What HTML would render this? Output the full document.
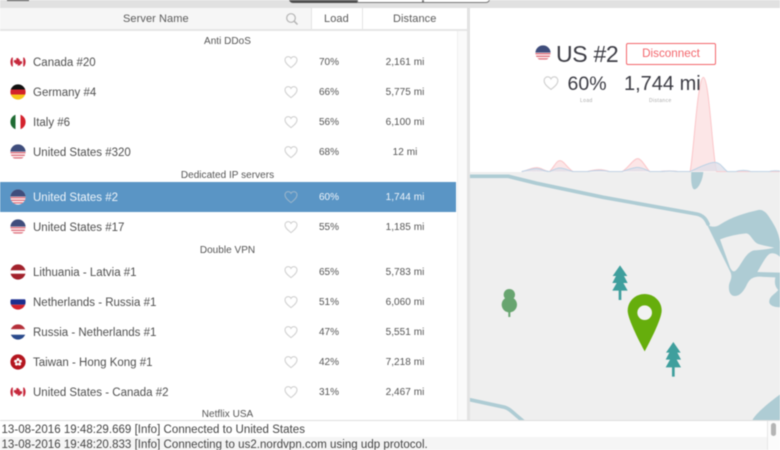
<!DOCTYPE html>
<html>
<head>
<meta charset="utf-8">
<style>
html,body{margin:0;padding:0;background:#fff}
body{width:780px;height:450px;position:relative;overflow:hidden;font-family:"Liberation Sans",sans-serif;color:#4a4a4a}
#w{position:absolute;left:0;top:0;width:780px;height:450px;overflow:hidden;filter:blur(.4px)}
.a{position:absolute}
.t{position:absolute;white-space:nowrap;font-size:11px;line-height:14px;letter-spacing:.08px}
.sec{position:absolute;left:-1px;width:457px;text-align:center;font-size:10px;line-height:12px;letter-spacing:.03px;color:#555}
.r{position:absolute;left:0;width:456px;height:30px}
.r .n{position:absolute;left:33px;top:8.500px;font-size:11.500px;line-height:14px;white-space:nowrap;color:#4f4f4f}
.r .l{position:absolute;left:319px;top:10px;font-size:10px;line-height:12px;color:#555}
.r .d{position:absolute;left:359px;width:92px;text-align:center;top:10px;font-size:10px;line-height:12px;letter-spacing:.05px;color:#555}
.r svg.f{position:absolute;left:10px;top:7px;width:16px;height:16px}
.r svg.h{position:absolute;left:284px;top:8px;width:14px;height:14px}
.s{background:#5a95c5}
.s .n,.s .l,.s .d{color:#eef4fa}
</style>
</head>
<body>
<div id="w">
<svg width="0" height="0" style="position:absolute">
<defs>
<clipPath id="c"><circle cx="8" cy="8" r="7.600"/></clipPath>
<symbol id="us" viewBox="0 0 16 16"><g clip-path="url(#c)"><rect width="16" height="16" fill="#fff"/><rect y="8" width="16" height="1.400" fill="#e0737f"/><rect y="10.600" width="16" height="1.400" fill="#e0737f"/><rect y="13.200" width="16" height="1.400" fill="#e0737f"/><rect width="16" height="7.600" fill="#3f4d7c"/></g></symbol>
<symbol id="ca" viewBox="0 0 16 16"><g clip-path="url(#c)"><rect width="16" height="16" fill="#fff"/><rect y="3.500" x="0" width="2.800" height="9" fill="#c6283c"/><rect y="3.500" x="13.200" width="2.800" height="9" fill="#c6283c"/><path d="M8 3.800l1 1.700.9-.4-.3 2.300 1.300-.7.3.8 1.100-.2-.4 1.400.5.4-2.300 1.700.2.800-2-.3V12h-.6v-1.900l-2 .3.2-.8L3.600 8l.5-.4-.4-1.400 1.100.2.3-.8 1.300.7-.3-2.300.9.4z" fill="#c6283c"/></g></symbol>
<symbol id="de" viewBox="0 0 16 16"><g clip-path="url(#c)"><rect width="16" height="5.500" fill="#111"/><rect y="5.500" width="16" height="5" fill="#d3222b"/><rect y="10.500" width="16" height="5.500" fill="#f5c61a"/></g></symbol>
<symbol id="it" viewBox="0 0 16 16"><g clip-path="url(#c)"><rect width="5.500" height="16" fill="#1f6b33"/><rect x="5.500" width="5" height="16" fill="#fff"/><rect x="10.500" width="5.500" height="16" fill="#d4232d"/></g></symbol>
<symbol id="lv" viewBox="0 0 16 16"><g clip-path="url(#c)"><rect width="16" height="16" fill="#a2222c"/><rect y="6.300" width="16" height="3.400" fill="#fff"/></g></symbol>
<symbol id="ru" viewBox="0 0 16 16"><g clip-path="url(#c)"><rect width="16" height="5.300" fill="#fff"/><rect y="5.300" width="16" height="5.400" fill="#1c2f8f"/><rect y="10.700" width="16" height="5.300" fill="#d4232d"/></g></symbol>
<symbol id="nl" viewBox="0 0 16 16"><g clip-path="url(#c)"><rect width="16" height="5.300" fill="#b5303a"/><rect y="5.300" width="16" height="5.400" fill="#fff"/><rect y="10.700" width="16" height="5.300" fill="#2a4a8c"/></g></symbol>
<symbol id="hk" viewBox="0 0 16 16"><g clip-path="url(#c)"><rect width="16" height="16" fill="#b4161f"/><circle cx="8" cy="5.500" r="1.500" fill="#fff"/><circle cx="10.400" cy="7.300" r="1.500" fill="#fff"/><circle cx="9.500" cy="10.100" r="1.500" fill="#fff"/><circle cx="6.500" cy="10.100" r="1.500" fill="#fff"/><circle cx="5.600" cy="7.300" r="1.500" fill="#fff"/></g></symbol>
<symbol id="hr" viewBox="0 0 14 14"><path d="M7 12.600C4.600 10.700 1 8.200 1 4.900 1 2.900 2.500 1.600 4.100 1.600 5.300 1.600 6.400 2.300 7 3.400 7.600 2.300 8.700 1.600 9.900 1.600 11.500 1.600 13 2.900 13 4.900 13 8.200 9.400 10.700 7 12.600z" fill="none" stroke="#cfcfcf" stroke-width="1"/></symbol>
</defs>
</svg>

<!-- top bar -->
<div class="a" style="left:0;top:0;width:780px;height:8px;background:#e1e1e1"></div>
<div class="a" style="left:7px;top:-1px;width:22px;height:2px;background:#444"></div>
<div class="a" style="left:289px;top:-4px;width:68px;height:7px;background:#505050;border-radius:0 0 0 4px"></div>
<div class="a" style="left:357px;top:-4px;width:66px;height:7px;background:#fff;border:1px solid #777;box-sizing:border-box"></div>
<div class="a" style="left:423px;top:-4px;width:67px;height:7px;background:#fff;border:1px solid #777;box-sizing:border-box;border-radius:0 0 4px 0"></div>

<!-- header -->
<div class="a" style="left:0;top:8px;width:311px;height:21px;background:#f6f6f6"></div>
<div class="a" style="left:311px;top:8px;width:52px;height:21px;background:#fff;border-left:1px solid #e4e4e4;box-sizing:border-box"></div>
<div class="a" style="left:362px;top:8px;width:106px;height:21px;background:#fff;border-left:1px solid #e4e4e4;box-sizing:border-box"></div>
<div class="a" style="left:0;top:29px;width:468px;height:2px;background:#e6e6e6"></div>
<div class="t" style="left:123px;top:12px;color:#5a5a5a">Server Name</div>
<div class="t" style="left:324px;top:12px;color:#5a5a5a">Load</div>
<div class="t" style="left:393px;top:12px;color:#5a5a5a">Distance</div>
<svg class="a" style="left:285px;top:12px" width="14" height="14" viewBox="0 0 14 14"><circle cx="6" cy="6" r="4.300" fill="none" stroke="#b5b5b5" stroke-width="1.200"/><path d="M9.200 9.200l3.300 3.300" stroke="#b5b5b5" stroke-width="1.500"/></svg>

<!-- list scrollbar & divider -->
<div class="a" style="left:457px;top:31px;width:10px;height:390px;background:#fafafa;border-left:1px solid #f0f0f0;box-sizing:border-box"></div>
<div class="a" style="left:467px;top:8px;width:3px;height:413px;background:#e3e3e3"></div>

<!-- rows -->
<div class="sec" style="top:36px">Anti DDoS</div>
<div class="r" style="top:47px"><svg class="f"><use href="#ca"/></svg><div class="n">Canada #20</div><svg class="h"><use href="#hr"/></svg><div class="l">70%</div><div class="d">2,161 mi</div></div>
<div class="r" style="top:77px"><svg class="f"><use href="#de"/></svg><div class="n">Germany #4</div><svg class="h"><use href="#hr"/></svg><div class="l">66%</div><div class="d">5,775 mi</div></div>
<div class="r" style="top:107px"><svg class="f"><use href="#it"/></svg><div class="n">Italy #6</div><svg class="h"><use href="#hr"/></svg><div class="l">56%</div><div class="d">6,100 mi</div></div>
<div class="r" style="top:137px"><svg class="f"><use href="#us"/></svg><div class="n">United States #320</div><svg class="h"><use href="#hr"/></svg><div class="l">68%</div><div class="d">12 mi</div></div>
<div class="sec" style="top:170px">Dedicated IP servers</div>
<div class="r s" style="top:182px"><svg class="f"><use href="#us"/></svg><div class="n">United States #2</div><svg class="h" style="opacity:.55"><use href="#hr"/></svg><div class="l">60%</div><div class="d">1,744 mi</div></div>
<div class="r" style="top:212px"><svg class="f"><use href="#us"/></svg><div class="n">United States #17</div><svg class="h"><use href="#hr"/></svg><div class="l">55%</div><div class="d">1,185 mi</div></div>
<div class="sec" style="top:245px">Double VPN</div>
<div class="r" style="top:257px"><svg class="f"><use href="#lv"/></svg><div class="n">Lithuania - Latvia #1</div><svg class="h"><use href="#hr"/></svg><div class="l">65%</div><div class="d">5,783 mi</div></div>
<div class="r" style="top:287px"><svg class="f"><use href="#ru"/></svg><div class="n">Netherlands - Russia #1</div><svg class="h"><use href="#hr"/></svg><div class="l">51%</div><div class="d">6,060 mi</div></div>
<div class="r" style="top:317px"><svg class="f"><use href="#nl"/></svg><div class="n">Russia - Netherlands #1</div><svg class="h"><use href="#hr"/></svg><div class="l">47%</div><div class="d">5,551 mi</div></div>
<div class="r" style="top:347px"><svg class="f"><use href="#hk"/></svg><div class="n">Taiwan - Hong Kong #1</div><svg class="h"><use href="#hr"/></svg><div class="l">42%</div><div class="d">7,218 mi</div></div>
<div class="r" style="top:377px"><svg class="f"><use href="#ca"/></svg><div class="n">United States - Canada #2</div><svg class="h"><use href="#hr"/></svg><div class="l">31%</div><div class="d">2,467 mi</div></div>
<div class="sec" style="top:409px">Netflix USA</div>

<!-- map -->
<div class="a" style="left:470px;top:172px;width:310px;height:249px;background:#efefef"></div>
<svg class="a" style="left:470px;top:170px" width="310" height="251" viewBox="0 0 930 753">
 <g fill="none" stroke="#aeccd4" stroke-linejoin="round" stroke-linecap="round">
  <path d="M-5 19H115L200 40 400 82 680 132C700 136 708 148 714 162" stroke-width="11"/>
  <path d="M-5 688L105 712C118 716 125 725 165 758" stroke-width="11"/>
 </g>
 <path fill="#aeccd4" d="M664 6H700C698 30 685 58 673 58 665 58 662 30 664 6z"/>
 <path fill="#aeccd4" d="M708 158C716 172 735 173 748 165 785 140 830 128 865 120 880 118 890 128 900 145 915 168 925 185 930 215L935 240V412C910 412 895 405 898 392 900 378 915 372 925 360 915 350 913 338 916 322L870 320C845 320 838 330 830 345 822 362 810 378 795 378 780 378 775 362 777 345 779 333 788 325 782 308z"/>
 <path fill="#efefef" d="M750 208C775 198 805 192 828 190 842 190 848 215 865 222 885 228 900 230 913 233 895 238 870 240 852 241 825 248 815 285 797 302 790 307 785 302 780 292z"/>
 <path fill="#efefef" d="M862 306C872 290 885 262 898 252 910 246 925 252 936 268V308z"/>
 <path fill="#aeccd4" d="M845 756C850 735 900 695 935 670V756z"/>
 <!-- trees -->
 <g fill="#3f9f9d">
  <path d="M450 286L472 318H462L473 339H460L473 362H454V390H446V362H427L440 339H427L438 318H428z"/>
  <path d="M610 516L632 548H622L633 569H620L633 592H614V620H606V592H587L600 569H587L598 548H588z"/>
 </g>
 <g fill="#68a570"><circle cx="118" cy="374" r="17"/><circle cx="118" cy="404" r="23"/><rect x="115" y="415" width="6" height="26"/></g>
 <path fill="#66ae0c" d="M524 372C552 372 575 394 575 422 575 446 540 515 524 544 508 515 473 446 473 422 473 394 496 372 524 372z"/>
 <circle cx="524" cy="428" r="22" fill="#f2f2f2"/>
</svg>

<!-- info panel -->
<svg class="a" style="left:470px;top:0" width="310" height="172" viewBox="0 0 930 516">
 <path d="M155 515C175 510 185 503 200 503 215 503 220 512 238 515 250 505 258 482 270 482 282 482 292 505 310 515H350C370 510 375 509 388 509 400 509 410 512 420 515H455C470 510 490 476 503 476 516 476 530 508 540 515H570C585 512 610 512 625 515H660C670 480 682 232 700 232 718 232 728 480 740 515H930" fill="#fce6e7" stroke="#fbc5c8" stroke-width="3"/>
 <path d="M155 515C175 510 185 506 200 506 215 506 220 514 238 515 250 510 258 504 270 504 282 504 292 510 310 515H350C370 512 375 511 388 511 400 511 410 513 420 515H455C470 510 490 502 503 502 516 502 530 510 540 515H570C590 513 610 513 625 515H660C680 505 715 487 735 487 750 487 760 505 772 515H795C810 510 830 510 845 515H895C905 512 920 512 930 513" fill="#dfdfe9" fill-opacity=".8" stroke="#bcd3e6" stroke-width="3"/>
</svg>
<svg class="a" style="left:535px;top:45px;width:16px;height:16px"><use href="#us"/></svg>
<div class="a" style="left:556px;top:39.500px;font-size:23px;line-height:28px;letter-spacing:-.3px;color:#3c3c44;white-space:nowrap">US #2</div>
<div class="a" style="left:626px;top:43px;width:90px;height:22px;box-sizing:border-box;border:1.700px solid #f3666c;border-radius:2px;color:#f3666c;font-size:11.700px;line-height:19px;text-align:center;background:#fff">Disconnect</div>
<svg class="a" style="left:543px;top:75px" width="16" height="16" viewBox="0 0 14 14"><use href="#hr"/></svg>
<div class="a" style="left:567.500px;top:71px;font-size:19.500px;line-height:26px;color:#3c3c44;white-space:nowrap">60%</div>
<div class="a" style="left:624px;top:71px;font-size:20px;line-height:26px;color:#3c3c44;white-space:nowrap">1,744 mi</div>
<div class="a" style="left:580px;top:98px;font-size:5px;line-height:7px;color:#aaa;letter-spacing:.4px">Load</div>
<div class="a" style="left:649px;top:98px;font-size:5px;line-height:7px;color:#aaa;letter-spacing:.4px">Distance</div>

<!-- log -->
<div class="a" style="left:0;top:420px;width:780px;height:1px;background:#dedede"></div>
<div class="a" style="left:0;top:421px;width:768px;height:16px;background:#fff"></div>
<div class="a" style="left:0;top:437px;width:768px;height:13px;background:#f5f5f5"></div>
<div class="a" style="left:767px;top:421px;width:13px;height:29px;background:#fbfbfb;border-left:1px solid #e8e8e8;box-sizing:border-box"></div>
<div class="a" style="left:771px;top:423px;width:5px;height:13px;background:#b4b4b4;border-radius:3px"></div>
<div class="t" style="left:1.500px;top:423px;font-size:11.500px;letter-spacing:.03px;color:#444">13-08-2016 19:48:29.669 [Info] Connected to United States</div>
<div class="t" style="left:1.500px;top:438px;font-size:11.500px;letter-spacing:.03px;color:#444">13-08-2016 19:48:20.833 [Info] Connecting to us2.nordvpn.com using udp protocol.</div>
</div>
</body>
</html>
